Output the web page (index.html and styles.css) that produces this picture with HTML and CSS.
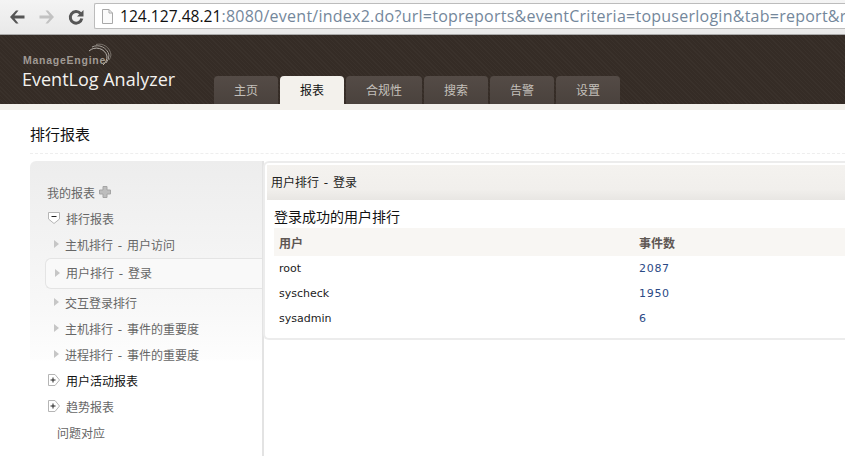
FILE: index.html
```html
<!DOCTYPE html>
<html lang="en">

<head>
    <meta charset="UTF-8">
    <title>EventLog Analyzer</title>
    <link rel="stylesheet" href="styles.css">
</head>

<body>

    <div class="browser-bar">
        <svg class="nav-icon" width="20" height="16" viewBox="0 0 20 16">
            <path d="M8 1.5 L2 8 L8 14.5 L10.5 14.5 L6.5 9.6 H16.5 V6.4 H6.5 L10.5 1.5 Z" fill="#555"/>
        </svg>
        <svg class="nav-icon" width="20" height="16" viewBox="0 0 20 16">
            <path d="M11 1.5 L17 8 L11 14.5 L8.5 14.5 L12.5 9.6 H2.5 V6.4 H12.5 L8.5 1.5 Z" fill="#c2c2c2"/>
        </svg>
        <svg class="nav-icon reload" width="18" height="18" viewBox="0 0 18 18">
            <path d="M13.5 5.5 A5.8 5.8 0 1 0 14.8 10.5" fill="none" stroke="#555" stroke-width="3"/>
            <path d="M10 8.5 H16.5 V2 Z" fill="#555"/>
        </svg>
        <div class="address">
            <svg class="file-icon" width="13" height="15" viewBox="0 0 13 15">
                <path d="M1.5 .5 H8 L11.5 4 V14.5 H1.5 Z M8 .5 V4 H11.5" fill="#fbfbfb" stroke="#a8a8a8"/>
            </svg>
            <span class="url"><span class="host">124.127.48.21</span>:8080/event/index2.do?url=topreports&amp;eventCriteria=topuserlogin&amp;tab=report&amp;r</span>
        </div>
    </div>

    <header class="app-header">
        <div class="brand">
            <svg class="brand-arcs" width="24" height="24" viewBox="0 0 24 24">
                <path d="M1 8 A11 11 0 0 1 19 13 A11 11 0 0 1 15 22" fill="none" stroke="#b8b3ad" stroke-width="1"/>
                <path d="M4 4 A12 12 0 0 1 21 12 A12 12 0 0 1 18 20" fill="none" stroke="#a59f99" stroke-width="1"/>
                <path d="M8 1.5 A12 12 0 0 1 23 12 A12 12 0 0 1 21 17" fill="none" stroke="#7a736c" stroke-width="1"/>
            </svg>
            <div class="brand-company">ManageEngine</div>
            <div class="brand-product">EventLog Analyzer</div>
        </div>
        <nav class="tabs">
            <a class="tab">主页</a>
            <a class="tab active">报表</a>
            <a class="tab">合规性</a>
            <a class="tab">搜索</a>
            <a class="tab">告警</a>
            <a class="tab">设置</a>
        </nav>
    </header>

    <div class="header-strip"></div>

    <div class="page">
        <h1 class="page-title">排行报表</h1>

        <div class="content">
            <aside class="sidebar">
                <div class="side-item my-reports">我的报表
                    <svg class="plus-icon" width="12" height="12" viewBox="0 0 12 12">
                        <path d="M4 .5 H8 V4 H11.5 V8 H8 V11.5 H4 V8 H.5 V4 H4 Z" fill="#bdbdbd" stroke="#a5a5a5"/>
                    </svg>
                </div>
                <div class="side-item group">
                    <svg class="tree-icon" width="12" height="12" viewBox="0 0 12 12">
                        <path d="M.5 .5 H11.5 V7 L6 11.5 L.5 7 Z" fill="#fff" stroke="#b5b5b5"/>
                        <path d="M3.5 4.5 H8.5" stroke="#222"/>
                    </svg>
                    排行报表
                </div>
                <div class="side-item child"><i class="arrow"></i>主机排行 - 用户访问</div>
                <div class="side-item child selected"><i class="arrow"></i>用户排行 - 登录</div>
                <div class="side-item child"><i class="arrow"></i>交互登录排行</div>
                <div class="side-item child"><i class="arrow"></i>主机排行 - 事件的重要度</div>
                <div class="side-item child"><i class="arrow"></i>进程排行 - 事件的重要度</div>
                <div class="side-item group dark">
                    <svg class="tree-icon" width="12" height="12" viewBox="0 0 12 12">
                        <path d="M.5 .5 H7 L11.5 6 L7 11.5 H.5 Z" fill="#fff" stroke="#b5b5b5"/>
                        <path d="M2.5 6 H7.5 M5 3.5 V8.5" stroke="#222"/>
                    </svg>
                    用户活动报表
                </div>
                <div class="side-item group">
                    <svg class="tree-icon" width="12" height="12" viewBox="0 0 12 12">
                        <path d="M.5 .5 H7 L11.5 6 L7 11.5 H.5 Z" fill="#fff" stroke="#b5b5b5"/>
                        <path d="M2.5 6 H7.5 M5 3.5 V8.5" stroke="#222"/>
                    </svg>
                    趋势报表
                </div>
                <div class="side-item plain">问题对应</div>
            </aside>

            <main class="panel">
                <div class="panel-head">用户排行 - 登录</div>
                <div class="panel-body">
                    <h2 class="report-title">登录成功的用户排行</h2>
                    <table class="report-table">
                        <thead>
                            <tr>
                                <th>用户</th>
                                <th>事件数</th>
                            </tr>
                        </thead>
                        <tbody>
                            <tr>
                                <td>root</td>
                                <td class="count">2087</td>
                            </tr>
                            <tr>
                                <td>syscheck</td>
                                <td class="count">1950</td>
                            </tr>
                            <tr>
                                <td>sysadmin</td>
                                <td class="count">6</td>
                            </tr>
                        </tbody>
                    </table>
                </div>
            </main>
        </div>
    </div>

</body>

</html>
```

FILE: styles.css
```css
html,
body {
    margin: 0;
    height: 456px;
    overflow: hidden;
}

body {
    width: 845px;
    background-color: #fff;
    font-family: "Liberation Sans", "Noto Sans CJK SC", sans-serif;
    font-size: 12px;
    color: #555;
}

/* browser chrome */
.browser-bar {
    display: flex;
    align-items: center;
    height: 35px;
    box-sizing: border-box;
    padding-left: 8px;
    background: linear-gradient(#f4f4f4, #e9e9e9);
    border-bottom: 1px solid #a9a9a9;
}

.nav-icon {
    margin-right: 9px;
    flex: none;
}

.reload {
    margin-left: 1px;
    margin-right: 9px;
}

.address {
    display: flex;
    align-items: center;
    flex: none;
    width: 760px;
    height: 26px;
    box-sizing: border-box;
    padding-left: 6px;
    margin-top: -2px;
    background: #fff;
    border: 1px solid #bcbcbc;
    border-right: none;
    border-radius: 2px 0 0 2px;
    overflow: hidden;
    white-space: nowrap;
}

.file-icon {
    flex: none;
}

.url {
    margin-left: 6px;
    font-family: "Open Sans", sans-serif;
    font-size: 16px;
    letter-spacing: .25px;
    color: #74879b;
}

.host {
    font-size: 15.6px;
    letter-spacing: 0;
    color: #111;
}

/* app header */
.app-header {
    display: flex;
    height: 69px;
    background-color: #352c26;
    background-image: repeating-linear-gradient(45deg, rgba(255, 255, 255, .025) 0 1px, transparent 1px 3px);
    box-sizing: border-box;
}

.brand {
    position: relative;
    width: 214px;
    padding: 19px 0 0 23px;
    box-sizing: border-box;
}

.brand-arcs {
    position: absolute;
    left: 88px;
    top: 8px;
}

.brand-company {
    font-size: 10.5px;
    font-weight: bold;
    letter-spacing: .75px;
    color: #a09a94;
}

.brand-product {
    margin: 1px 0 0 -1px;
    font-family: "Open Sans", sans-serif;
    font-size: 18px;
    white-space: nowrap;
    color: #f3f1ee;
}

.tabs {
    display: flex;
    gap: 2px;
    align-self: flex-end;
}

.tab {
    padding: 0 20px;
    height: 28px;
    line-height: 30px;
    text-align: center;
    color: #c4c0bb;
    background: linear-gradient(#544b46, #4a423d);
    border-radius: 4px 4px 0 0;
}

.tab.active {
    color: #111;
    background: #f3f1ec;
}

.header-strip {
    height: 6px;
    background-color: #f3f1ec;
}

/* page */
.page {
    padding: 12px 0 0 30px;
}

.page-title {
    margin: 0;
    padding-bottom: 5px;
    font-size: 15px;
    font-weight: normal;
    line-height: 26px;
    color: #111;
    border-bottom: 1px dashed #eee;
}

.content {
    display: flex;
    margin-top: 7px;
}

.sidebar {
    flex: none;
    width: 234px;
    height: 295px;
    padding-top: 18px;
    box-sizing: border-box;
    background: linear-gradient(#ededed, #f8f8f8 50%, #fdfdfd 67%, #fff 68%);
    border-radius: 6px 0 0 0;
    border-right: 2px solid #e3e3e3;
}

.side-item {
    display: flex;
    align-items: center;
    height: 26px;
    font-family: "DejaVu Sans", "Noto Sans CJK SC", sans-serif;
    font-size: 12px;
    word-spacing: 1px;
    color: #666;
    white-space: nowrap;
}

.my-reports {
    padding-left: 17px;
}

.plus-icon {
    margin-left: 4px;
}

.group {
    padding-left: 18px;
}

.tree-icon {
    margin-right: 6px;
}

.group.dark {
    color: #111;
}

.child {
    padding-left: 24px;
}

.arrow {
    width: 0;
    height: 0;
    margin-right: 6px;
    border-left: 5px solid #c6c6c6;
    border-top: 4px solid transparent;
    border-bottom: 4px solid transparent;
}

.child.selected {
    height: 31px;
    margin: 1px 0 0 15px;
    padding-left: 9px;
    padding-bottom: 2px;
    background: #f9f9f9;
    border: 1px solid #e4e4e4;
    border-right: none;
    border-radius: 6px 0 0 6px;
    box-sizing: border-box;
}

.plain {
    padding-left: 27px;
}

.panel {
    flex: 1;
    align-self: flex-start;
    height: 179px;
    box-sizing: border-box;
    margin-left: -1px;
    padding: 2px 0 0 2px;
    background: #fff;
    border: 2px solid #ececec;
    border-right: none;
    border-radius: 6px 0 0 6px;
}

.panel-head {
    height: 35px;
    line-height: 36px;
    padding-left: 4px;
    font-family: "DejaVu Sans", "Noto Sans CJK SC", sans-serif;
    word-spacing: 1px;
    color: #222;
    background: linear-gradient(#f4f2ef, #f1efec 70%, #e8e6e3);
}

.panel-body {
    padding: 7px 0 0 7px;
}

.report-title {
    margin: 0;
    font-size: 14px;
    font-weight: normal;
    line-height: 20px;
    color: #111;
}

.report-table {
    width: 100%;
    border-collapse: collapse;
    table-layout: fixed;
    margin-top: 1px;
    font-family: "DejaVu Sans", "Noto Sans CJK SC", sans-serif;
    font-size: 11px;
    color: #222;
}

.report-table th {
    height: 28px;
    padding: 0 0 0 5px;
    font-size: 12px;
    text-align: left;
    color: #5f5753;
    background-color: #f8f6f3;
}

.report-table th:first-child {
    width: 355px;
}

.report-table td {
    height: 25px;
    padding: 0 0 0 5px;
}

.report-table .count {
    color: #2b4a85;
    letter-spacing: .7px;
}
```
